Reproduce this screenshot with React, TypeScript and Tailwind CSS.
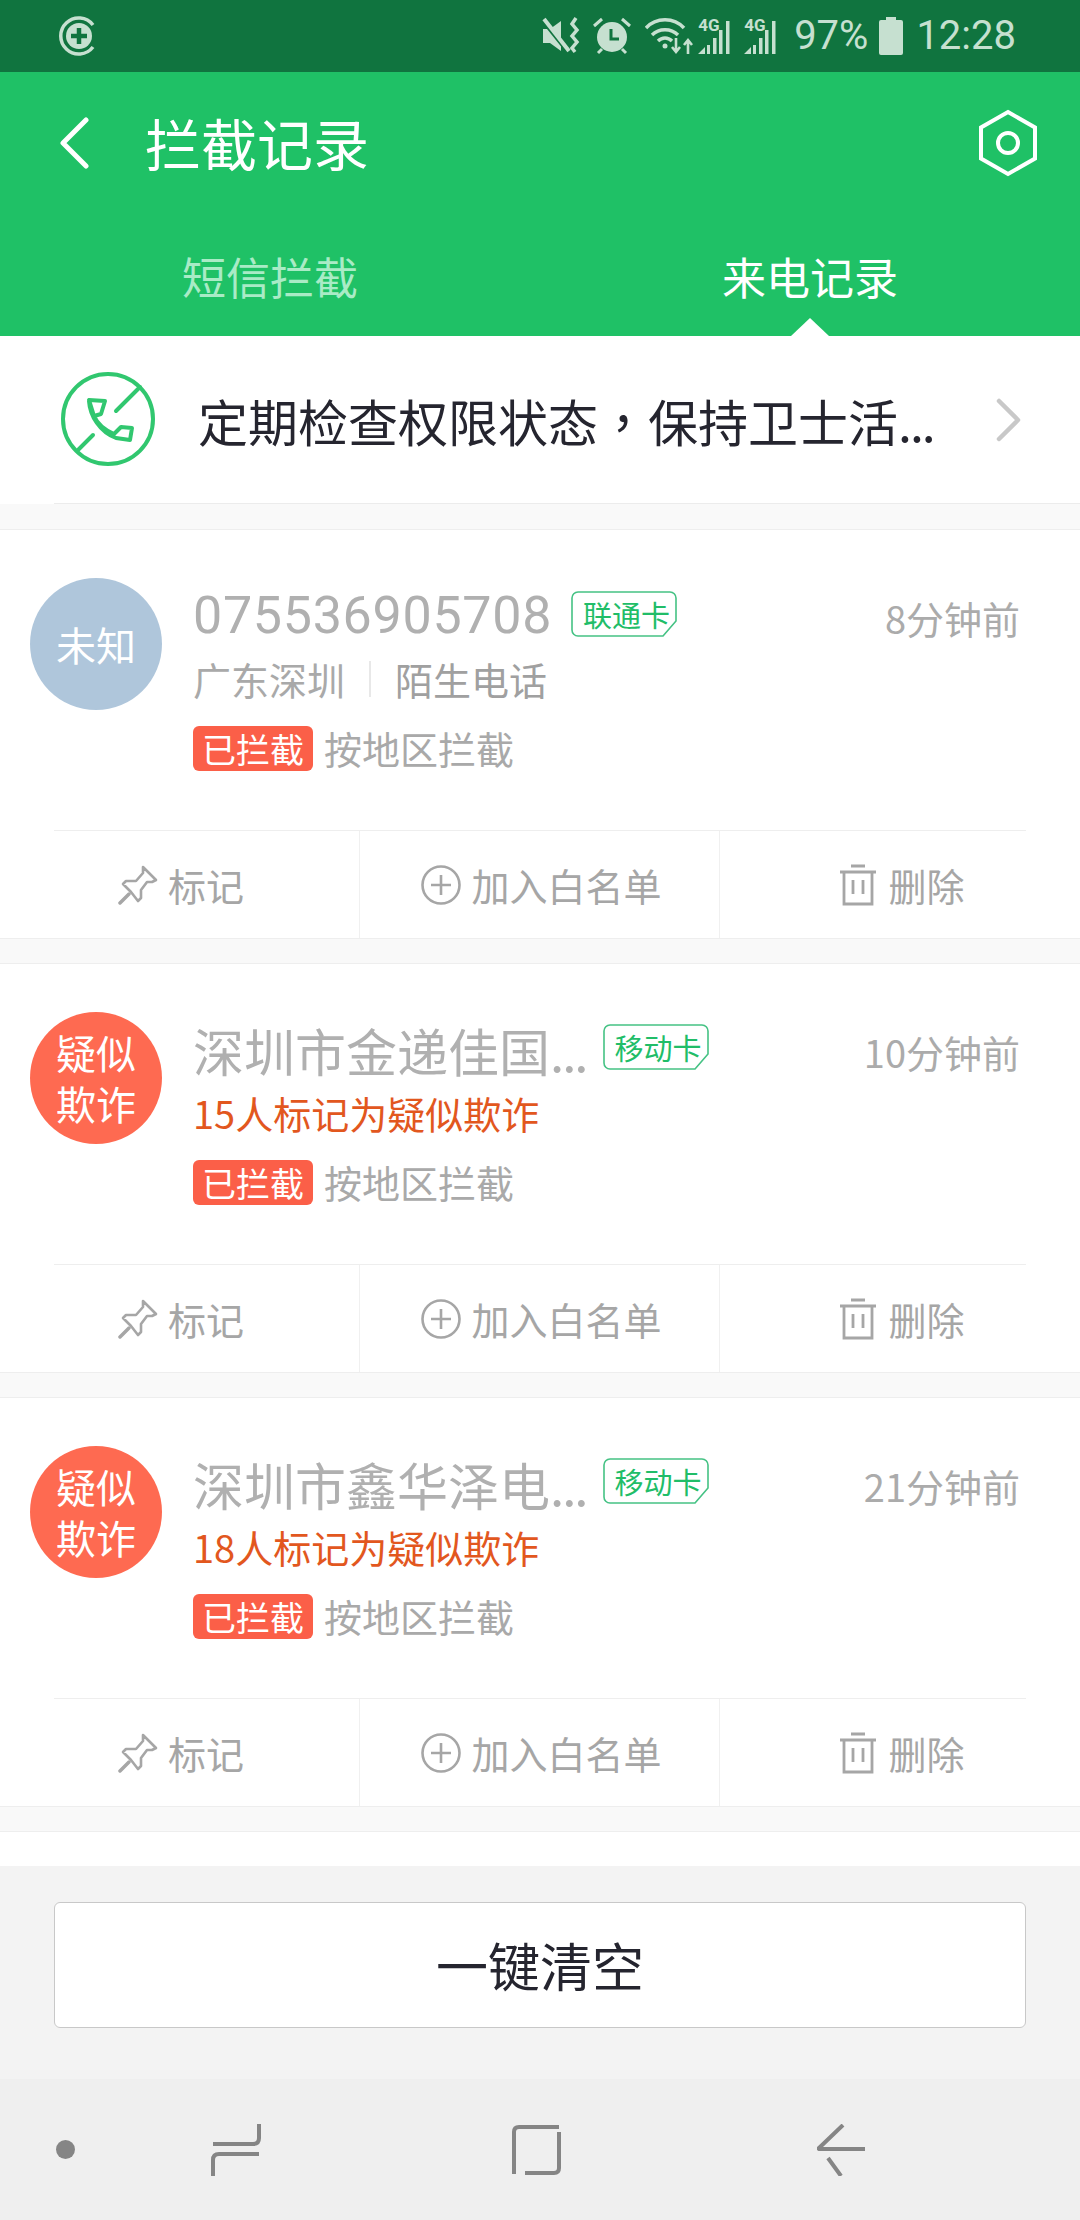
import React from 'react';

const CJK = '"Noto Sans CJK SC", "Noto Sans", sans-serif';

interface RecordItem {
  name: string;
  carrier: string;
  time: string;
  avatar: string[];
  desc?: string;
}

const records: RecordItem[] = [
  { name: '075536905708', carrier: '联通卡', time: '8分钟前', avatar: ['未知'] },
  { name: '深圳市金递佳国', carrier: '移动卡', time: '10分钟前', avatar: ['疑似', '欺诈'], desc: '15人标记为疑似欺诈' },
  { name: '深圳市鑫华泽电', carrier: '移动卡', time: '21分钟前', avatar: ['疑似', '欺诈'], desc: '18人标记为疑似欺诈' },
];

const StatusIcons = () => (
  <div className="flex items-center">
    {/* mute + vibrate */}
    <svg width="40" height="38" viewBox="0 0 40 38" fill="#c6e0d0" className="mr-[11px]">
      <path d="M1 12h7l11-8v30l-11-8H1z" />
      <path d="M1 3l24 30" stroke="#10743f" strokeWidth="5" />
      <path d="M2 2l25 32" stroke="#c6e0d0" strokeWidth="4" />
      <path d="M34 1l-4 6 5 6-5 6 5 6-5 6 3 4" fill="none" stroke="#c6e0d0" strokeWidth="3.500" />
    </svg>
    {/* alarm */}
    <svg width="38" height="38" viewBox="0 0 38 38" fill="#c6e0d0" className="mr-[14px]">
      <circle cx="19" cy="20" r="15" />
      <path d="M18 12v10h8" fill="none" stroke="#10743f" strokeWidth="3" />
      <path d="M1 9l8-7M37 9l-8-7M5 36l4-4M33 36l-4-4" stroke="#c6e0d0" strokeWidth="3" />
    </svg>
    {/* wifi */}
    <svg width="48" height="38" viewBox="0 0 48 38" fill="none" stroke="#c6e0d0" strokeWidth="3.400" className="mr-[5px]">
      <path d="M1 11C11 0 29 0 39 11" />
      <path d="M7 18c7-7 19-7 26 0" />
      <path d="M13 24c4-4 10-4 14 0" />
      <circle cx="20" cy="29" r="2.500" fill="#c6e0d0" stroke="none" />
      <path d="M31 21v13M27 30l4 5 4-5M43 37V24M39 28l4-5 4 5" strokeWidth="2.600" />
    </svg>
    {[0, 1].map((i) => (
      <div key={i} className={`relative w-[36px] h-[36px] ${i === 0 ? 'mr-[10px]' : 'mr-[14px]'}`}>
        <svg width="36" height="36" viewBox="0 0 36 36" fill="#c6e0d0">
          <path d="M0 36l7-7v7zM9 27h3v9H9zM15 20h3.500v16H15zM21 12h3.500v24H21zM28 3h3.500v33H28z" />
        </svg>
        <span className="absolute left-0 top-[-3px] text-[17px] leading-[20px] font-bold text-[#c6e0d0] font-['Roboto']">4G</span>
      </div>
    ))}
    <span className="text-[40px] leading-[40px] text-[#c6e0d0] font-['Roboto'] mr-[11px]">97%</span>
    <svg width="24" height="38" viewBox="0 0 24 38" fill="#c6e0d0" className="mr-[13px]">
      <path d="M7 0h10v3h5a2 2 0 0 1 2 2v31a2 2 0 0 1-2 2H2a2 2 0 0 1-2-2V5a2 2 0 0 1 2-2h5z" />
    </svg>
    <span className="text-[40px] leading-[40px] text-[#c6e0d0] font-['Roboto']">12:28</span>
  </div>
);

const CarrierBadge = ({ label, className }: { label: string; className: string }) => (
  <div className={`relative w-[107px] h-[46px] flex items-center pl-[12px] ${className}`}>
    <svg width="107" height="46" viewBox="0 0 107 46" fill="none" stroke="#45c284" strokeWidth="1.600" strokeLinejoin="round" className="absolute inset-0">
      <path d="M7 1h92a6 6 0 0 1 6 6v23L92 45H7a6 6 0 0 1-6-6V7a6 6 0 0 1 6-6z" />
    </svg>
    <span className="text-[29px] leading-[36px] text-[#21bd68]">{label}</span>
  </div>
);

const ActionIcon = ({ kind }: { kind: 'pin' | 'plus' | 'trash' }) => {
  if (kind === 'pin') {
    return (
      <svg width="40" height="40" viewBox="0 0 40 40" fill="none" stroke="#a6a6a6" strokeWidth="2.600" strokeLinejoin="round">
        <path d="M25 2l13 13-4 2-5 0-6 8 0 8-3 3-7-9-8-8 3-3 10 0 7-8z" />
        <path d="M2 38l9-9" strokeWidth="3.500" strokeLinecap="round" />
      </svg>
    );
  }
  if (kind === 'plus') {
    return (
      <svg width="40" height="40" viewBox="0 0 40 40" fill="none" stroke="#a6a6a6" strokeWidth="2.600">
        <circle cx="20" cy="20" r="18.500" />
        <path d="M20 10v20M10 20h20" />
      </svg>
    );
  }
  return (
    <svg width="36" height="42" viewBox="0 0 36 42" fill="none" stroke="#a6a6a6" strokeWidth="2.800">
      <path d="M0 8h36M11 2h14" />
      <path d="M4 9v31h28V9" />
      <path d="M13 16v14M23 16v14" />
    </svg>
  );
};

const RecordCard = ({ item }: { item: RecordItem }) => {
  const fraud = item.avatar.length > 1;
  return (
    <div className="bg-white border-y border-[#eeeeee] h-[410px] flex flex-col">
      <div className="h-[300px] flex pl-[30px] pr-[60px] pt-[48px]">
        <div className={`w-[132px] h-[132px] rounded-full flex flex-col items-center justify-center text-white text-[40px] leading-[51px] shrink-0 ${fraud ? 'bg-[#fe6a51]' : 'bg-[#afc6db]'}`}>
          {item.avatar.map((t) => (
            <span key={t}>{t}</span>
          ))}
        </div>
        <div className="ml-[31px] flex-1 flex flex-col">
          <div className="flex items-center h-[70px] mt-[3px]">
            {fraud ? (
              <span className="text-[#b0b0b0] leading-[70px] text-[51px]">
                {item.name}
                <span className="tracking-[-2px]">...</span>
              </span>
            ) : (
              <span className="text-[#b0b0b0] leading-[70px] text-[52px] tracking-[0.7px] font-['Roboto']">{item.name}</span>
            )}
            <CarrierBadge label={item.carrier} className={fraud ? 'ml-[16px] -mt-[7px]' : 'ml-[19px] -mt-[5px]'} />
            <span className="ml-auto text-[38px] leading-[50px] text-[#ababab] mt-[3px]">{item.time}</span>
          </div>
          {item.desc ? (
            <div className="h-[50px] mt-[3px] text-[38px] leading-[50px] text-[#e2571e]">{item.desc}</div>
          ) : (
            <div className="h-[50px] mt-[3px] flex items-center text-[#a9a9a9] text-[38px] leading-[50px]">
              <span>广东深圳</span>
              <span className="mx-[24px] w-[2px] h-[36px] bg-[#e8e8e8]" />
              <span className="text-[#a0a0a0]">陌生电话</span>
            </div>
          )}
          <div className="flex items-center mt-[21px]">
            <span className="w-[120px] h-[45px] rounded-[6px] bg-[#fb5f48] text-white text-[34px] leading-[46px] text-center">已拦截</span>
            <span className="ml-[11px] text-[38px] leading-[46px] text-[#a9a9a9]">按地区拦截</span>
          </div>
        </div>
      </div>
      <div className="mx-[54px] h-px bg-[#eeeeee]" />
      <div className="flex-1 flex text-[38px] text-[#a6a6a6]">
        <div className="w-[360px] flex items-center justify-center gap-[10px] pl-[3px] border-r border-[#f0f0f0]">
          <ActionIcon kind="pin" />
          <span>标记</span>
        </div>
        <div className="w-[360px] flex items-center justify-center gap-[10px] pl-[4px] border-r border-[#f0f0f0]">
          <ActionIcon kind="plus" />
          <span>加入白名单</span>
        </div>
        <div className="w-[360px] flex items-center justify-center gap-[12px] pl-[5px]">
          <ActionIcon kind="trash" />
          <span>删除</span>
        </div>
      </div>
    </div>
  );
};

export default function App() {
  return (
    <div className="w-[1080px] h-[2220px] flex flex-col bg-[#f9f9f9] overflow-hidden" style={{ fontFamily: CJK }}>
      {/* status bar */}
      <div className="h-[72px] bg-[#10743f] flex items-center justify-between pl-[59px] pr-[64px] shrink-0">
        <svg width="40" height="40" viewBox="0 0 40 40" fill="none">
          <path d="M34 9A18 18 0 1 0 34 31" stroke="#c6e0d0" strokeWidth="3.500" />
          <circle cx="20" cy="20" r="13" fill="#c6e0d0" />
          <path d="M20 12v16M12 20h16" stroke="#10743f" strokeWidth="4.500" />
        </svg>
        <StatusIcons />
      </div>

      {/* header */}
      <div className="h-[264px] bg-[#1fc166] flex flex-col shrink-0">
        <div className="h-[142px] flex items-center pl-[58px] pr-[42px]">
          <svg width="34" height="52" viewBox="0 0 34 52" fill="none" stroke="white" strokeWidth="5" strokeLinecap="round" strokeLinejoin="round">
            <path d="M28 3L5 26l23 23" />
          </svg>
          <span className="ml-[53px] -mt-[3px] text-[56px] leading-[70px] text-white">拦截记录</span>
          <svg width="60" height="68" viewBox="0 0 60 68" fill="none" stroke="white" strokeWidth="4" className="ml-auto">
            <path d="M30 3l27 15.500v31L30 65 3 49.500v-31z" />
            <circle cx="30" cy="34" r="10" />
          </svg>
        </div>
        <div className="flex-1 flex">
          <div className="w-1/2 flex justify-center pt-[32px] text-[44px] leading-[60px] text-[#a9ebc6]">短信拦截</div>
          <div className="w-1/2 flex flex-col items-center pt-[32px]">
            <span className="text-[44px] leading-[60px] text-white">来电记录</span>
            <div className="mt-auto w-0 h-0 border-x-[19px] border-x-transparent border-b-[18px] border-b-white" />
          </div>
        </div>
      </div>

      {/* permission banner */}
      <div className="h-[168px] bg-white flex items-center pl-[60px] pr-[58px] shrink-0">
        <svg width="96" height="96" viewBox="0 0 96 96" fill="none" stroke="#31c76f" strokeWidth="4" strokeLinecap="round" strokeLinejoin="round" className="shrink-0 mt-[-1px]">
          <circle cx="48" cy="47" r="45" />
          <path d="M80 15L56 39M33 63L18 78" />
          <path d="M29 28l16 1-4 13-7 2zM29 29c1 15 11 31 27 37M34 44c3 7 11 14 20 18l7-7 11 1-2 12-14-2" />
        </svg>
        <span className="ml-[42px] text-[50px] leading-[70px] text-[#25252f] whitespace-nowrap">
          定期检查权限状态<span style={{ fontFamily: '"Noto Sans CJK TC", sans-serif' }}>，</span>保持卫士活<span className="tracking-[-2px]">...</span>
        </span>
        <svg width="26" height="44" viewBox="0 0 26 44" fill="none" stroke="#c8c8c8" strokeWidth="4.500" strokeLinecap="round" strokeLinejoin="round" className="ml-auto">
          <path d="M3 3l19 19L3 41" />
        </svg>
      </div>
      <div className="h-px ml-[54px] bg-[#ececec] -mt-px shrink-0" />

      {/* records */}
      <div className="flex flex-col gap-[24px] pt-[25px] shrink-0">
        {records.map((r) => (
          <RecordCard key={r.name} item={r} />
        ))}
      </div>
      <div className="h-[35px] mt-[24px] bg-white border-t border-[#eeeeee] shrink-0" />

      {/* bottom action */}
      <div className="flex-1 bg-[#f3f3f3] px-[54px] pt-[36px]">
        <button className="w-full h-[126px] bg-white border border-[#c8c8c8] rounded-[6px] text-[52px] text-[#25252f]">一键清空</button>
      </div>

      {/* nav bar */}
      <div className="h-[141px] bg-[#efefef] flex items-center shrink-0 pl-[56px]">
        <div className="w-[19px] h-[19px] rounded-full bg-[#858585]" />
        <svg width="50" height="52" viewBox="0 0 50 52" fill="none" stroke="#858585" strokeWidth="4" className="ml-[136px] mt-[1px]">
          <path d="M48 0v14q0 6-6 6H2M48 30H8q-6 0-6 6v16" />
        </svg>
        <svg width="50" height="52" viewBox="0 0 50 52" fill="none" stroke="#858585" strokeWidth="4" className="ml-[250px]">
          <path d="M48 3H8Q3 3 3 8v42M48 8v36q0 5-5 5H14" />
        </svg>
        <svg width="48" height="52" viewBox="0 0 48 52" fill="none" stroke="#858585" strokeWidth="4" className="ml-[256px]">
          <path d="M26 1L2 24q-1 1 1 1h45M11 34l13 18" />
        </svg>
      </div>
    </div>
  );
}
